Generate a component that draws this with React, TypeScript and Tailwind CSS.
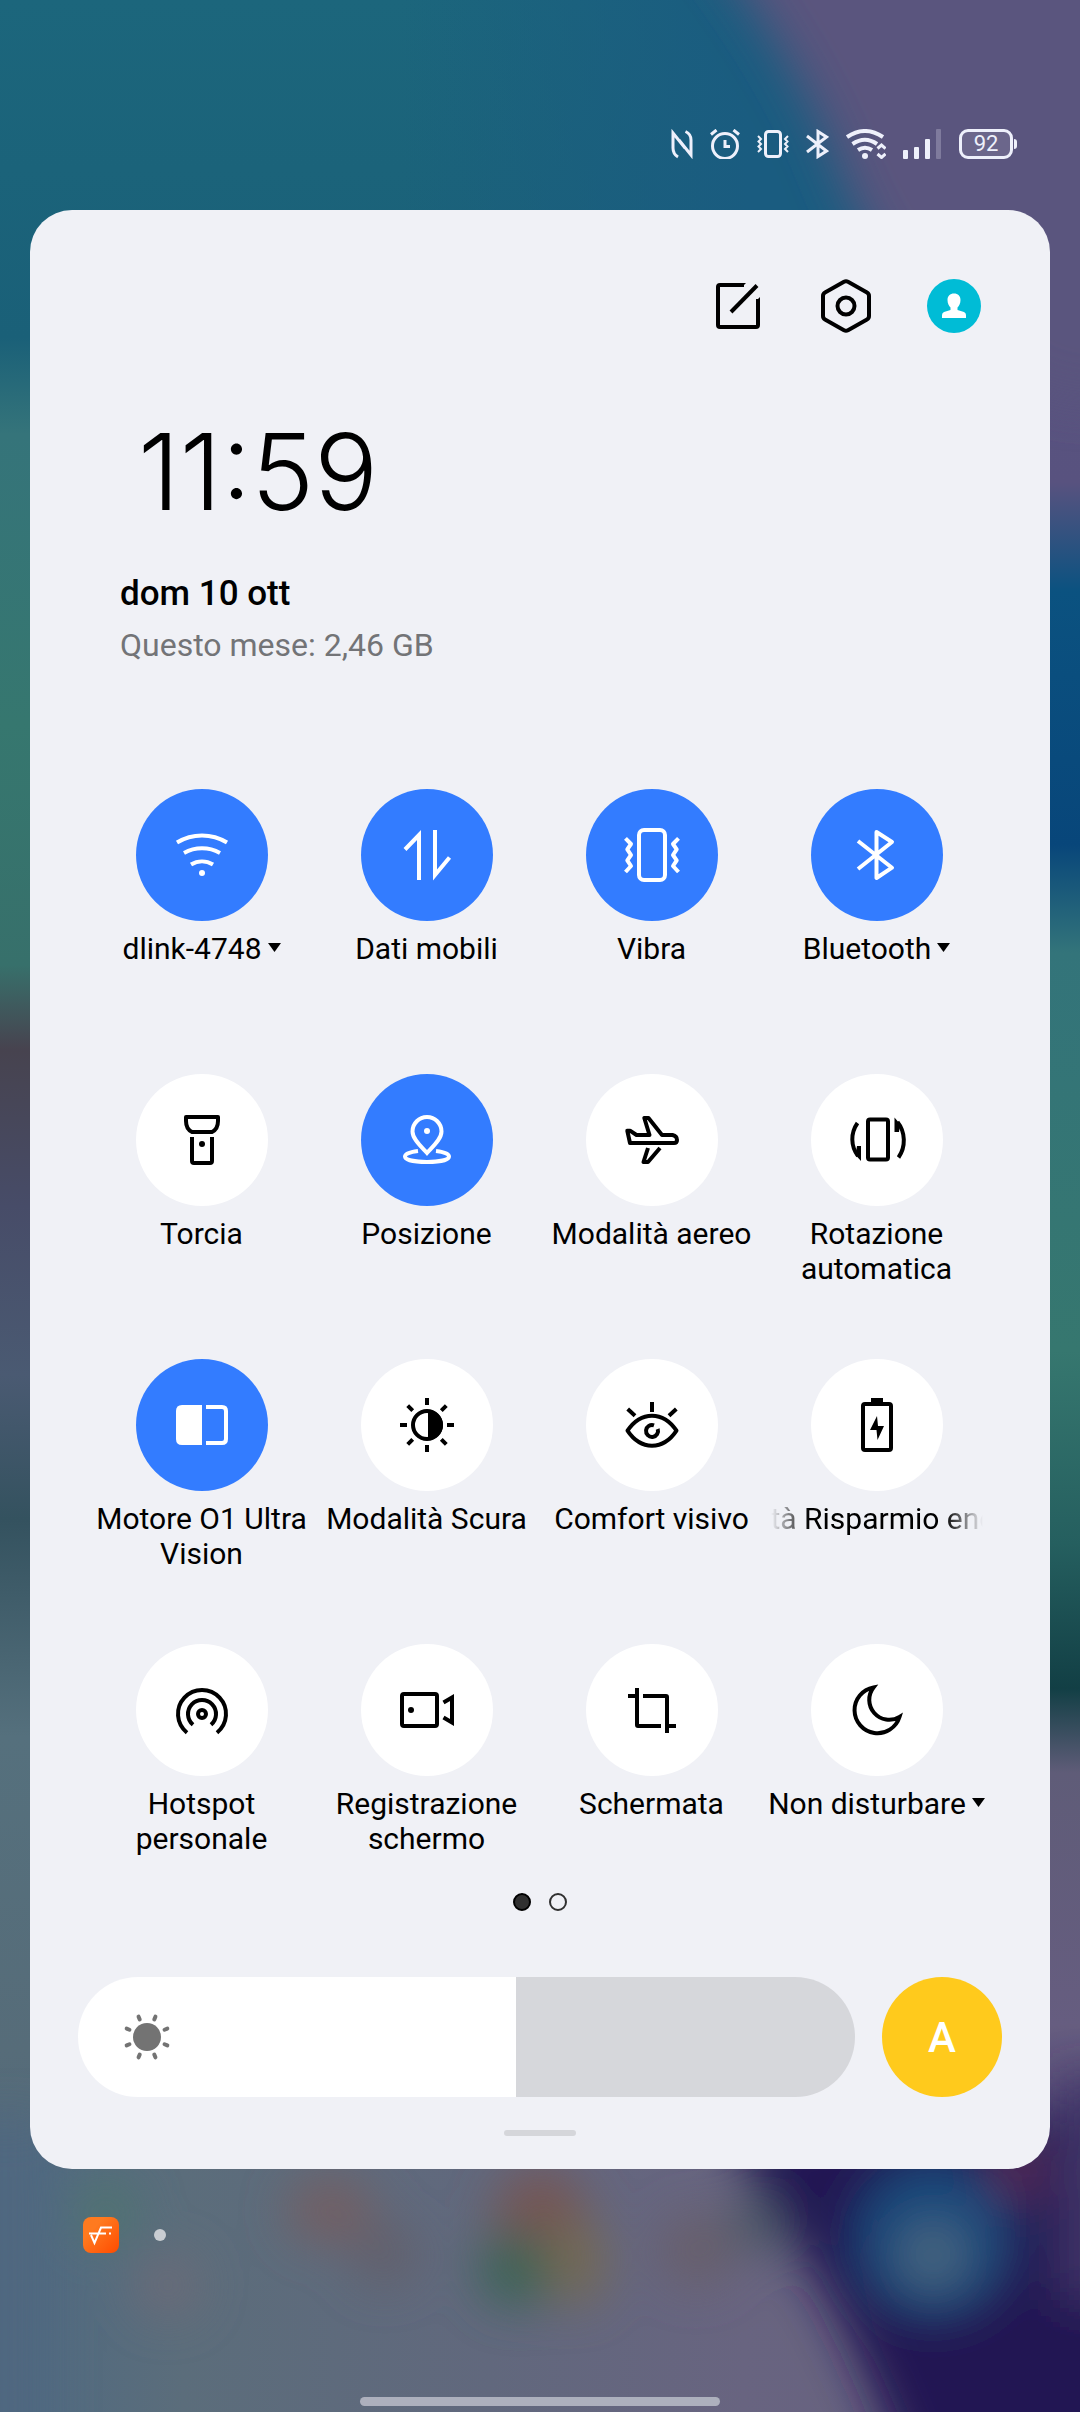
import React, { useState } from 'react';

interface Tile {
  id: string;
  label: string;
  icon: React.ReactNode;
  active?: boolean;
  hasMenu?: boolean;
  scrolling?: boolean;
}

const tiles: Tile[] = [
  {
    id: 'wifi',
    label: 'dlink-4748',
    active: true,
    hasMenu: true,
    icon: (
      <>
        <path d="M5 17.5A48 48 0 0 1 55 17.5M12 28A37 37 0 0 1 48 28M19 39.5A21 21 0 0 1 41 39.5" />
        <circle cx="30" cy="48" r="3" fill="currentColor" stroke="none" />
      </>
    ),
  },
  {
    id: 'data',
    label: 'Dati mobili',
    active: true,
    icon: <path d="M8 24.5L22 10V55M38 5V50L52.5 32.5" />,
  },
  {
    id: 'vibrate',
    label: 'Vibra',
    active: true,
    icon: (
      <>
        <rect x="17" y="5" width="26" height="50" rx="5" />
        <path d="M3.5 13.3L9 19L5.3 24.3L9 30L5.3 35.3L9 41L3.5 47M56.5 13.3L51 19L54.7 24.3L51 30L54.7 35.3L51 41L56.5 47" strokeLinejoin="round" />
      </>
    ),
  },
  {
    id: 'bluetooth',
    label: 'Bluetooth',
    active: true,
    hasMenu: true,
    icon: <path d="M11 16L45 42.7L29.5 53V7L45 17L11 44" strokeLinejoin="round" />,
  },
  {
    id: 'torch',
    label: 'Torcia',
    icon: (
      <>
        <path d="M14 7H46V11Q46 19 40 22H20Q14 19 14 11Z" strokeLinejoin="round" />
        <path d="M20 27V51Q20 53 22 53H38Q40 53 40 51V27" />
        <circle cx="30" cy="34" r="3" fill="currentColor" stroke="none" />
      </>
    ),
  },
  {
    id: 'location',
    label: 'Posizione',
    active: true,
    icon: (
      <>
        <path d="M30 43C24 36.500 15.500 29 15.500 21.500A14.500 14.500 0 0 1 44.500 21.500C44.500 29 36 36.500 30 43Z" />
        <path d="M21 41C13 42 8 44 8 46.500C8 50 18 52 30 52S52 50 52 46.500C52 44 47 42 39 41" />
        <circle cx="30" cy="21" r="3" fill="currentColor" stroke="none" />
      </>
    ),
  },
  {
    id: 'airplane',
    label: 'Modalità aereo',
    icon: (
      <>
        <path d="M8 33L5.300 20.700H8L14.500 25H27.500L22.300 8H26.500L40 25H50.500Q55 26 55 30Q55 33 52 33Z" strokeLinejoin="round" />
        <path d="M26 38L21.500 52H26L38 38" strokeLinejoin="round" />
      </>
    ),
  },
  {
    id: 'rotation',
    label: 'Rotazione automatica',
    icon: (
      <>
        <rect x="21" y="9.500" width="20" height="40" rx="2" />
        <path d="M10.500 13C3.500 23 3.500 36 11 46M51.500 47.500C59 37 58.500 22 50.500 12" />
        <path d="M10 36H14V51L8.500 45ZM52 22H47.500V7.500L53 14Z" fill="currentColor" stroke="none" />
      </>
    ),
  },
  {
    id: 'vision',
    label: 'Motore O1 Ultra Vision',
    active: true,
    icon: (
      <>
        <path d="M30 10V50H10Q4 50 4 44V16Q4 10 10 10Z" fill="currentColor" stroke="none" />
        <path d="M34 12H50Q54 12 54 16V44Q54 48 50 48H34" />
      </>
    ),
  },
  {
    id: 'dark',
    label: 'Modalità Scura',
    icon: (
      <>
        <circle cx="30" cy="30" r="14" />
        <path d="M31 15A15 15 0 0 1 31 45Z" fill="currentColor" stroke="none" />
        <path d="M30 3V10M30 50V57M3 30H10M50 30H57M10.700 10.700L15.700 15.700M44.300 44.300L49.300 49.300M49.300 10.700L44.300 15.700M15.700 44.300L10.700 49.300" />
      </>
    ),
  },
  {
    id: 'eye',
    label: 'Comfort visivo',
    icon: (
      <>
        <path d="M30 7V17M5.700 14L13 20.700M54.300 14L47 20.700" />
        <path d="M5.500 35.700C12 26 20 20.700 30 20.700S48 26 54.500 35.700C48 45.500 40 50.700 30 50.700S12 45.500 5.500 35.700Z" strokeLinejoin="round" />
        <path d="M32 30.300A6 6 0 1 0 35.700 34" />
      </>
    ),
  },
  {
    id: 'battery',
    label: 'tà Risparmio ene',
    scrolling: true,
    icon: (
      <>
        <rect x="16" y="9" width="28" height="46" rx="2" />
        <path d="M24 3H36V8H24ZM30 21L23 35H29.500L30.500 45L37 31H31Z" fill="currentColor" stroke="none" />
      </>
    ),
  },
  {
    id: 'hotspot',
    label: 'Hotspot personale',
    icon: (
      <>
        <circle cx="30" cy="34" r="4" />
        <path d="M21 44.700A14 14 0 1 1 39 44.700M15 52.700A24 24 0 1 1 45 52.700" />
      </>
    ),
  },
  {
    id: 'record',
    label: 'Registrazione schermo',
    icon: (
      <>
        <rect x="5" y="14" width="35" height="32" rx="2" />
        <path d="M46.500 22.500L55 17.500V42.500L46.500 37.500" />
        <circle cx="14" cy="30" r="3" fill="currentColor" stroke="none" />
      </>
    ),
  },
  {
    id: 'screenshot',
    label: 'Schermata',
    icon: <path d="M6 16H13M15 8V45Q15 46 16 46H39M21 16H44Q45 16 45 17V53M47 46H54" />,
  },
  {
    id: 'dnd',
    label: 'Non disturbare',
    hasMenu: true,
    icon: <path d="M26.500 7.500A23 23 0 1 0 52.500 37A20 20 0 0 1 26.500 7.500Z" />,
  },
];

function Wallpaper() {
  return (
    <svg
      className="absolute inset-0 h-full w-full"
      viewBox="0 0 1080 2412"
      preserveAspectRatio="none"
      aria-hidden="true"
    >
      <defs>
        <linearGradient id="left-side" x1="0" y1="0" x2="0" y2="1">
          <stop offset="0" stopColor="#1c667c" />
          <stop offset="0.140" stopColor="#1a6078" />
          <stop offset="0.180" stopColor="#35747a" />
          <stop offset="0.300" stopColor="#36776f" />
          <stop offset="0.400" stopColor="#37706b" />
          <stop offset="0.435" stopColor="#47434f" />
          <stop offset="0.500" stopColor="#474c68" />
          <stop offset="0.570" stopColor="#4a5a72" />
          <stop offset="0.630" stopColor="#34525f" />
          <stop offset="0.720" stopColor="#55707d" />
          <stop offset="0.850" stopColor="#566c79" />
          <stop offset="1" stopColor="#4f647d" />
        </linearGradient>
        <linearGradient id="right-side" x1="0" y1="0" x2="0" y2="1">
          <stop offset="0" stopColor="#5b567f" />
          <stop offset="0.200" stopColor="#58527f" />
          <stop offset="0.245" stopColor="#0b5280" />
          <stop offset="0.350" stopColor="#08467a" />
          <stop offset="0.395" stopColor="#33747a" />
          <stop offset="0.560" stopColor="#36776f" />
          <stop offset="0.640" stopColor="#255f5f" />
          <stop offset="0.700" stopColor="#123f45" />
          <stop offset="0.735" stopColor="#5f5c78" />
          <stop offset="0.840" stopColor="#665d80" />
          <stop offset="0.900" stopColor="#4b3f70" />
          <stop offset="1" stopColor="#1c1048" />
        </linearGradient>
        <linearGradient id="top-blue" x1="0" y1="0" x2="1" y2="0">
          <stop offset="0" stopColor="#1a5c80" stopOpacity="0" />
          <stop offset="0.700" stopColor="#1a5c80" />
        </linearGradient>
        <linearGradient id="floor" x1="0" y1="0" x2="1" y2="0">
          <stop offset="0" stopColor="#506a80" />
          <stop offset="0.150" stopColor="#5b6d7b" />
          <stop offset="0.450" stopColor="#61687d" />
          <stop offset="0.700" stopColor="#686480" />
          <stop offset="1" stopColor="#665f80" />
        </linearGradient>
        <filter id="soft" x="-50%" y="-50%" width="200%" height="200%">
          <feGaussianBlur stdDeviation="24" />
        </filter>
      </defs>
      <rect width="1080" height="2412" fill="url(#left-side)" />
      <rect x="1000" y="200" width="80" height="2000" fill="#58527f" />
      <svg x="1000" width="80" height="2412" viewBox="0 0 80 2412" preserveAspectRatio="none">
        <rect width="80" height="2412" fill="url(#right-side)" />
      </svg>
      <rect x="400" y="0" width="500" height="230" fill="url(#top-blue)" />
      <g filter="url(#soft)">
        <path d="M690 -80H1180V400H1060Q900 330 840 170Q800 60 690 -80Z" fill="#5a547e" />
      </g>
      <rect x="30" y="2130" width="1020" height="282" fill="url(#floor)" />
      <g filter="url(#soft)">
        <rect x="-40" y="2120" width="90" height="360" fill="#506880" />
        <path d="M720 2120H1180V2500H915Q880 2400 835 2310Q780 2220 720 2120Z" fill="#201253" />
        <path d="M1060 2080H1180V2300H1060Z" fill="#403468" />
        <circle cx="107" cy="2212" r="32" fill="#4f736f" />
        <circle cx="168" cy="2285" r="32" fill="#6a6a78" />
        <ellipse cx="330" cy="2210" rx="44" ry="34" fill="#725f64" />
        <ellipse cx="385" cy="2255" rx="32" ry="30" fill="#625f6b" />
        <circle cx="540" cy="2215" r="46" fill="#765452" />
        <circle cx="516" cy="2270" r="38" fill="#3b6355" />
        <ellipse cx="576" cy="2262" rx="30" ry="44" fill="#746952" />
        <circle cx="696" cy="2250" r="36" fill="#685e6a" />
        <circle cx="755" cy="2225" r="26" fill="#4a5965" />
        <circle cx="933" cy="2238" r="76" fill="#184a7c" />
        <circle cx="933" cy="2255" r="36" fill="#46657e" />
        <circle cx="1016" cy="2172" r="26" fill="#5d2f55" />
      </g>
    </svg>
  );
}

function StatusBar() {
  return (
    <header className="flex items-center justify-end gap-[17px] pt-[129px] pr-[63px] text-[#eef0fb]">
      <svg width="22" height="30" viewBox="0 0 22 30" fill="none" stroke="currentColor" strokeWidth="3" aria-label="NFC">
        <path d="M7 28Q2 25 2 19V4L14 19M14.500 2.500Q20 5 20 11V26L8 11" />
      </svg>
      <svg width="30" height="30" viewBox="0 0 30 30" fill="none" stroke="currentColor" strokeWidth="3" aria-label="Sveglia">
        <circle cx="15" cy="17" r="12.500" />
        <path d="M15 11V17.500H20M1 5.500L6.500 1M29 5.500L23.500 1" />
      </svg>
      <svg width="32" height="30" viewBox="0 0 32 30" fill="none" stroke="currentColor" strokeWidth="3" aria-label="Vibrazione">
        <rect x="8.500" y="2.500" width="15" height="25" rx="3" />
        <path d="M1 7L4 10L1.500 12.500L4 15L1.500 17.500L4 20L1 23M31 7L28 10L30.500 12.500L28 15L30.500 17.500L28 20L31 23" strokeWidth="2" />
      </svg>
      <svg width="23" height="30" viewBox="0 0 23 30" fill="none" stroke="currentColor" strokeWidth="3" aria-label="Bluetooth">
        <path d="M1 7L20.500 22L12 27.500V2.500L20.500 8L1 23" />
      </svg>
      <svg width="40" height="30" viewBox="0 0 40 30" fill="none" stroke="currentColor" strokeWidth="4" aria-label="Wi-Fi">
        <path d="M1 8Q19 -4 37 8M6.500 15Q19 6.500 31 15M12 21Q19 16.500 26 21" />
        <circle cx="19" cy="27" r="3" fill="currentColor" stroke="none" />
        <path d="M31.500 19.500L35.500 16L39.500 19.500M31.500 25L35.500 28.500L39.500 25" strokeWidth="3" />
      </svg>
      <svg width="39" height="30" viewBox="0 0 39 30" fill="currentColor" aria-label="Segnale">
        <rect x="0" y="21" width="5" height="9" rx="1" />
        <rect x="11" y="18" width="5" height="12" rx="1" />
        <rect x="22" y="10" width="5" height="20" rx="1" />
        <rect x="33" y="0" width="5" height="30" rx="1" opacity="0.250" />
      </svg>
      <div className="flex items-center gap-px">
        <div className="flex h-[30px] w-[54px] items-center justify-center rounded-[9px] border-[3px] border-[#eef0fb] bg-white/10 text-[22px] leading-none">
          92
        </div>
        <div className="h-[10px] w-[3px] rounded-r-sm bg-[#eef0fb]" />
      </div>
    </header>
  );
}

function PanelActions() {
  return (
    <div className="flex justify-end gap-[54px] pr-[69px] text-black">
      <button aria-label="Modifica">
        <svg width="54" height="54" viewBox="0 0 54 54" fill="none" stroke="currentColor" strokeWidth="4">
          <path d="M33 6H9Q7 6 7 8V46Q7 48 9 48H45Q47 48 47 46V20" />
          <path d="M35 4L31 8H28V4ZM49 18L45 22V26H49Z" fill="currentColor" stroke="none" />
          <path d="M46 6.500L20 33" />
        </svg>
      </button>
      <button aria-label="Impostazioni">
        <svg width="54" height="54" viewBox="0 0 54 54" fill="none" stroke="currentColor" strokeWidth="4">
          <path d="M25 2.800Q27 1.700 29 2.800L48 13.500Q50 14.600 50 17V37Q50 39.400 48 40.500L29 51.200Q27 52.300 25 51.200L6 40.500Q4 39.400 4 37V17Q4 14.600 6 13.500Z" />
          <circle cx="27" cy="27" r="8.500" />
        </svg>
      </button>
      <button aria-label="Utente">
        <svg width="54" height="54" viewBox="0 0 54 54">
          <circle cx="27" cy="27" r="27" fill="#00bcd6" />
          <path
            d="M27 14.500C31 14.500 33.500 17 33.500 21C33.500 24.500 32 27 30.500 28.500V31L37 33Q39 34 39 36V39H15V36Q15 34 17 33L23.500 31V28.500C22 27 20.500 24.500 20.500 21C20.500 17 23 14.500 27 14.500Z"
            fill="#fff"
          />
        </svg>
      </button>
    </div>
  );
}

function TileLabel({ tile }: { tile: Tile }) {
  if (tile.scrolling) {
    return (
      <span className="h-[70px] w-[212px] overflow-hidden text-left whitespace-nowrap [mask-image:linear-gradient(to_right,transparent,black_18%,black_82%,transparent)]">
        {tile.label}
      </span>
    );
  }

  if (tile.hasMenu) {
    return (
      <span className="flex min-h-[70px] items-start gap-[6px] whitespace-nowrap">
        {tile.label}
        <svg width="13" height="35" viewBox="0 0 13 35" aria-hidden="true">
          <path d="M0 12H13L6.500 21Z" fill="currentColor" />
        </svg>
      </span>
    );
  }

  return <span className="min-h-[70px] max-w-[216px] text-center">{tile.label}</span>;
}

function QuickTile({ tile }: { tile: Tile }) {
  const [on, setOn] = useState(Boolean(tile.active));

  return (
    <button
      aria-pressed={on}
      onClick={() => setOn(!on)}
      className="flex min-w-0 flex-col items-center gap-[10px]"
    >
      <span
        className={`flex size-[132px] items-center justify-center rounded-full ${on ? 'bg-[#337cff] text-white' : 'bg-white text-black'}`}
      >
        <svg width="60" height="60" viewBox="0 0 60 60" fill="none" stroke="currentColor" strokeWidth="4" aria-hidden="true">
          {tile.icon}
        </svg>
      </span>
      <TileLabel tile={tile} />
    </button>
  );
}

function BrightnessRow() {
  const [brightness, setBrightness] = useState(564);
  const level = `${brightness / 10}%`;

  return (
    <div className="flex items-center gap-[27px] px-12">
      <div className="relative h-[120px] flex-1">
        <input
          type="range"
          aria-label="Luminosità"
          min={0}
          max={1000}
          value={brightness}
          onChange={(e) => setBrightness(Number(e.target.value))}
          className="block h-full w-full appearance-none rounded-full [&::-webkit-slider-thumb]:size-px [&::-webkit-slider-thumb]:appearance-none"
          style={{ background: `linear-gradient(to right, #ffffff ${level}, #d6d7db ${level})` }}
        />
        <svg
          className="pointer-events-none absolute top-[36px] left-[45px] text-[#737373]"
          width="48"
          height="48"
          viewBox="-24 -24 48 48"
          aria-hidden="true"
        >
          <circle r="14" fill="currentColor" />
          {[22.5, 67.5, 112.5, 157.5, 202.5, 247.5, 292.5, 337.5].map((angle) => (
            <path
              key={angle}
              d="M19 0H22"
              transform={`rotate(${angle})`}
              stroke="currentColor"
              strokeWidth="4"
              strokeLinecap="round"
            />
          ))}
        </svg>
      </div>
      <button
        aria-label="Luminosità automatica"
        className="size-[120px] rounded-full bg-[#ffca1c] text-[42px] font-medium text-white"
      >
        A
      </button>
    </div>
  );
}

export default function App() {
  return (
    <div className="relative flex min-h-screen flex-col overflow-hidden font-[Roboto,'Noto_Sans',sans-serif]">
      <Wallpaper />
      <div className="relative flex flex-1 flex-col">
        <StatusBar />

        <main className="mx-[30px] mt-[51px] rounded-[42px] bg-[#f0f1f6] pt-[69px] pb-[33px] text-black">
          <PanelActions />

          <section className="pl-[90px]">
            <div className="mt-[79px] pl-[18px] font-[Inter,sans-serif] text-[106px] leading-[120px] font-[350]">11:59</div>
            <div className="mt-[41px] text-[35px] leading-[42px] font-medium">dom 10 ott</div>
            <div className="mt-[11px] text-[32px] leading-[38px] text-[#737477]">Questo mese: 2,46 GB</div>
          </section>

          <section className="mt-[125px] grid grid-cols-4 gap-y-[73px] pr-[61px] pl-[59px] text-[30px] leading-[35px]">
            {tiles.map((tile) => (
              <QuickTile key={tile.id} tile={tile} />
            ))}
          </section>

          <div className="mt-[37px] mb-[66px] flex justify-center gap-[18px]">
            <span className="size-[18px] rounded-full border-2 border-black bg-[#303030]" />
            <span className="size-[18px] rounded-full border-2 border-[#303030]" />
          </div>

          <BrightnessRow />

          <div className="mx-auto mt-[33px] h-[6px] w-[72px] rounded-full bg-[#d5d6da]" />
        </main>

        <footer className="flex flex-1 flex-col justify-between pt-12 pb-[6px]">
          <div className="flex items-center gap-[35px] pl-[83px]">
            <svg width="36" height="36" viewBox="0 0 36 36" aria-hidden="true">
              <defs>
                <linearGradient id="app-badge" x1="0" y1="0" x2="1" y2="1">
                  <stop offset="0.300" stopColor="#ff7a1f" />
                  <stop offset="1" stopColor="#ff4b00" />
                </linearGradient>
              </defs>
              <rect width="36" height="36" rx="8" fill="url(#app-badge)" />
              <path d="M6 16.500H23M26 16.500H28M8 18L11.500 26L18 10.500H29" fill="none" stroke="#fff" strokeWidth="2" />
            </svg>
            <span className="size-3 rounded-full bg-[#c9cdd2]" />
          </div>
          <div className="mx-auto h-[9px] w-1/3 rounded-full bg-[#adb0bd]" />
        </footer>
      </div>
    </div>
  );
}
